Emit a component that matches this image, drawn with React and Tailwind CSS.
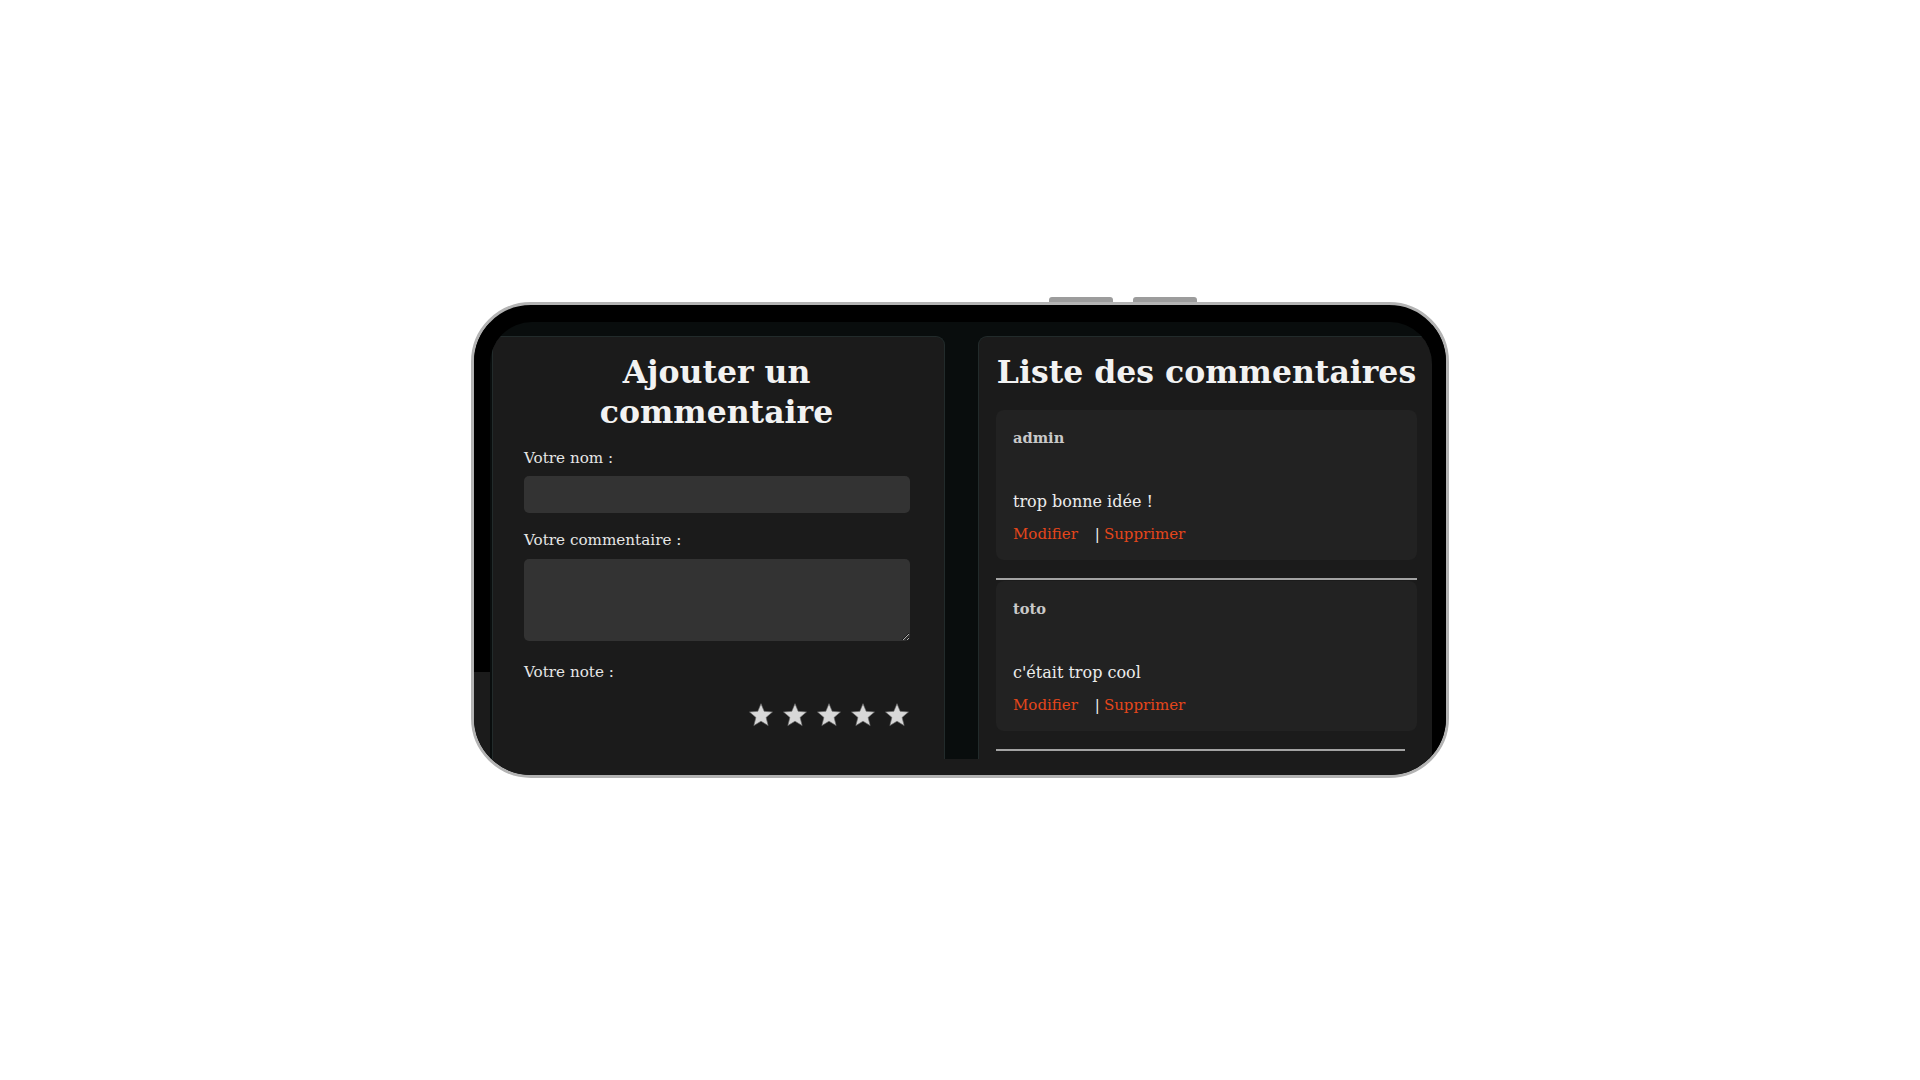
import React from "react";

const comments = [
  { author: "admin", text: "trop bonne idée !" },
  { author: "toto", text: "c'était trop cool" },
];

function Star() {
  return (
    <svg width="26" height="26" viewBox="0 0 24 24" className="shrink-0">
      <polygon
        points="12,1.5 14.9,8.6 22.6,9.2 16.7,14.2 18.6,21.8 12,17.7 5.4,21.8 7.3,14.2 1.4,9.2 9.1,8.6"
        fill="#d8d8d8"
        stroke="#6a6a6a"
        strokeWidth="0.6"
        strokeLinejoin="round"
      />
    </svg>
  );
}

function CommentForm() {
  return (
    <div className="flex w-[453px] flex-col rounded-t-[9px] border border-b-0 border-[#222b2b] bg-[#1b1b1b] pt-[15px] pr-[35px] pl-[31px]">
      <h2 className="text-center text-[31.5px] leading-[40px] font-bold text-[#f2f2f2]">
        Ajouter un
        <br />
        commentaire
      </h2>
      <label className="mt-[16px] text-[15.2px] leading-[20px] text-[#e6e6e6]">Votre nom :</label>
      <input type="text" className="mt-[8px] h-[37px] w-[386px] rounded-[5px] bg-[#333333] outline-none" />
      <label className="mt-[17px] text-[15.2px] leading-[20px] text-[#e6e6e6]">Votre commentaire :</label>
      <textarea className="mt-[9px] h-[82px] w-[386px] rounded-[5px] bg-[#333333] outline-none" />
      <label className="mt-[21px] text-[15.2px] leading-[20px] text-[#e6e6e6]">Votre note :</label>
      <div className="mt-[20px] flex w-[386px] justify-end gap-[8px]">
        {[1, 2, 3, 4, 5].map((n) => (
          <Star key={n} />
        ))}
      </div>
    </div>
  );
}

function CommentCard({ author, text }) {
  return (
    <div className="flex h-[150px] flex-col rounded-[8px] bg-[#222222] pt-[18px] pl-[17px]">
      <p className="text-[14.6px] leading-[20px] font-bold text-[#c9c9c9]">{author}</p>
      <p className="mt-[44px] text-[16px] leading-[20px] text-[#ececec]">{text}</p>
      <div className="mt-[12px] flex items-center text-[15px] leading-[20px]">
        <span className="text-[#e5461b]">Modifier</span>
        <span className="ml-[17px] text-[#f2f2f2]">|</span>
        <span className="ml-[4px] text-[#e5461b]">Supprimer</span>
      </div>
    </div>
  );
}

function CommentList() {
  return (
    <div className="flex flex-1 flex-col rounded-t-[9px] border border-r-0 border-b-0 border-[#222b2b] bg-[#1b1b1b] pt-[15px] pl-[17px]">
      <h2 className="w-[421px] text-center text-[31.5px] leading-[40px] font-bold whitespace-nowrap text-[#f2f2f2]">
        Liste des commentaires
      </h2>
      <div className="mt-[18px] w-[421px]">
        <CommentCard {...comments[0]} />
        <div className="mt-[18px] mb-[1px] h-[2px] bg-[#a3a3a3]" />
        <CommentCard {...comments[1]} />
        <div className="mt-[18px] h-[2px] w-[409px] bg-[#a3a3a3]" />
      </div>
    </div>
  );
}

export default function App() {
  return (
    <div className="h-screen w-full overflow-hidden bg-white pt-[297px] font-['DejaVu_Serif',serif]">
      <div className="mx-auto w-[978px]">
        {/* volume buttons on the top edge */}
        <div className="flex h-[5px] gap-[20px] pl-[578px]">
          <div className="w-[64px] rounded-t-[3px] bg-[#9c9c9c]" />
          <div className="w-[64px] rounded-t-[3px] bg-[#9c9c9c]" />
        </div>
        <div className="flex h-[476px] flex-col overflow-hidden rounded-[60px] border-[3px] border-[#b3b3b3] bg-black">
          <div className="flex flex-1">
            <div className="flex w-[16px] flex-col">
              <div className="h-[367px] bg-black" />
              <div className="flex-1 bg-[#1b1b1b]" />
            </div>
            <div className="flex flex-1 flex-col pt-[17px]">
              <div className="flex flex-1 gap-[33px] overflow-hidden rounded-t-[42px] bg-[#090d0d] pt-[14px] pl-[2px]">
                <CommentForm />
                <CommentList />
              </div>
            </div>
            <div className="w-[14px] bg-black" />
          </div>
          <div className="h-[16px] bg-[#1b1b1b]" />
        </div>
      </div>
    </div>
  );
}
